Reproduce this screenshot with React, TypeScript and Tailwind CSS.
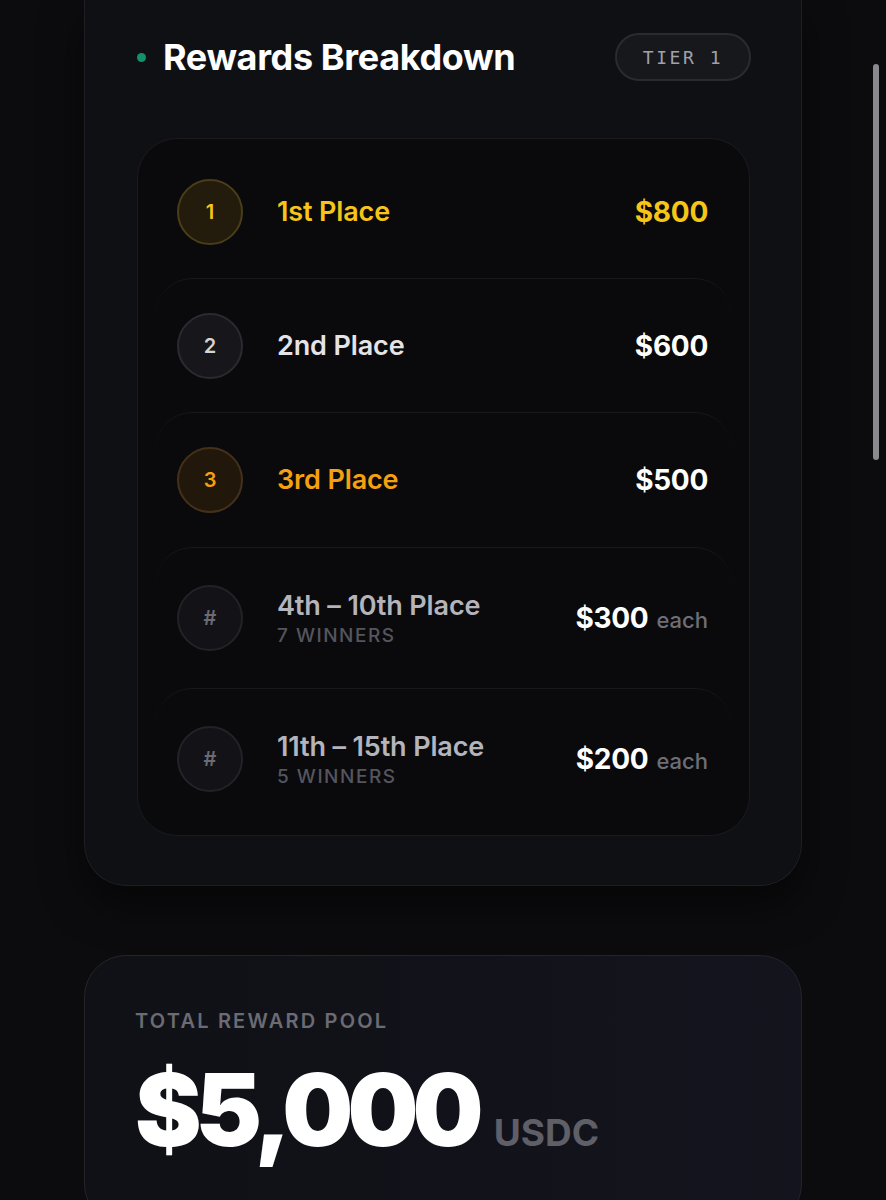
import React from 'react';

type Row = {
  badge: string;
  title: string;
  sub?: string;
  amount: string;
  each?: boolean;
  badgeCls: string;
  titleCls: string;
  amountCls: string;
  h: string;
};

const ROWS: Row[] = [
  {
    badge: '1',
    title: '1st Place',
    amount: '$800',
    badgeCls: 'bg-[#231c0c] border-[#4a3d17] text-[#f5c518]',
    titleCls: 'text-[#f5c518]',
    amountCls: 'text-[#f5c518]',
    h: 'h-[133px]',
  },
  {
    badge: '2',
    title: '2nd Place',
    amount: '$600',
    badgeCls: 'bg-[#17171b] border-[#2a2a30] text-[#d4d4d8]',
    titleCls: 'text-[#e4e4e7]',
    amountCls: 'text-white',
    h: 'h-[134px]',
  },
  {
    badge: '3',
    title: '3rd Place',
    amount: '$500',
    badgeCls: 'bg-[#22170b] border-[#45311a] text-[#f5a00f]',
    titleCls: 'text-[#f5a00f]',
    amountCls: 'text-white',
    h: 'h-[135px]',
  },
  {
    badge: '#',
    title: '4th – 10th Place',
    sub: '7 Winners',
    amount: '$300',
    each: true,
    badgeCls: 'bg-[#131317] border-[#222227] text-[#6b6b74]',
    titleCls: 'text-[#b4b4bc]',
    amountCls: 'text-white',
    h: 'h-[141px]',
  },
  {
    badge: '#',
    title: '11th – 15th Place',
    sub: '5 Winners',
    amount: '$200',
    each: true,
    badgeCls: 'bg-[#131317] border-[#222227] text-[#6b6b74]',
    titleCls: 'text-[#b4b4bc]',
    amountCls: 'text-white',
    h: 'h-[141px]',
  },
];

export default function App() {
  return (
    <div className="relative min-h-[1200px] bg-[#0c0c0e] px-[84px] pb-10 font-['Inter','Noto_Sans',sans-serif] overflow-hidden">
      {/* Rewards card */}
      <div className="rounded-b-[42px] border-x border-b border-[#1e1f25] bg-[#0f1014] pl-[52px] pr-[50px] pt-[33px] pb-[49px] shadow-[0_20px_40px_rgba(0,0,0,0.5)]">
        <div className="flex items-center justify-between h-12">
          <div className="flex items-center gap-[17px]">
            <span className="w-[9px] h-[9px] rounded-full bg-[#14916a]" />
            <h2 className="text-[36px] leading-none font-bold tracking-[-0.01em] text-white">Rewards Breakdown</h2>
          </div>
          <div className="h-12 px-[26px] flex items-center rounded-full border-2 border-[#2a2b30] bg-[#17181c] font-['DejaVu_Sans_Mono',monospace] text-[18px] tracking-[0.14em] text-[#a1a1aa]">
            TIER 1
          </div>
        </div>

        <div className="mt-[57px] mr-[1px] rounded-[40px] border border-[#1a1a1f] bg-[#0a0a0d] px-[18px] py-[6px]">
          {ROWS.map((r, i) => (
            <div
              key={r.title}
              className={`${r.h} flex items-center pl-[21px] pr-[23px] rounded-[36px] ${
                i > 0 ? 'border-t border-[#17171c]' : ''
              }`}
            >
              <div
                className={`w-[66px] h-[66px] shrink-0 rounded-full border-2 flex items-center justify-center text-[20px] font-semibold ${r.badgeCls}`}
              >
                {r.badge}
              </div>
              <div className="ml-[34px] flex-1 flex flex-col">
                <span className={`text-[27px] leading-[32px] font-semibold tracking-[-0.005em] ${r.titleCls}`}>{r.title}</span>
                {r.sub && (
                  <span className="mt-[3px] text-[19px] leading-[22px] font-medium uppercase tracking-[0.08em] text-[#55555e]">
                    {r.sub}
                  </span>
                )}
              </div>
              <div className="flex items-baseline gap-[8px]">
                <span className={`text-[28px] font-bold tracking-[-0.01em] ${r.amountCls}`}>{r.amount}</span>
                {r.each && <span className="text-[22px] font-medium text-[#6e6e77]">each</span>}
              </div>
            </div>
          ))}
        </div>
      </div>

      {/* Total pool card */}
      <div className="mt-[69px] rounded-[42px] border border-[#24252c] bg-gradient-to-r from-[#101116] to-[#13141d] px-[50px] pt-[50px] pb-16">
        <div className="text-[20px] font-semibold uppercase tracking-[0.11em] text-[#6b6b74]">Total Reward Pool</div>
        <div className="mt-[24px] flex items-baseline gap-[16px]">
          <span className="text-[100px] leading-none font-black tracking-[-0.06em] text-white">$5,000</span>
          <span className="text-[37px] font-bold text-[#5f5f68]">USDC</span>
        </div>
      </div>

      {/* overlay scrollbar */}
      <div className="absolute right-[7px] top-[64px] w-[6px] h-[396px] rounded-full bg-[#8a8a8e]" />
    </div>
  );
}
